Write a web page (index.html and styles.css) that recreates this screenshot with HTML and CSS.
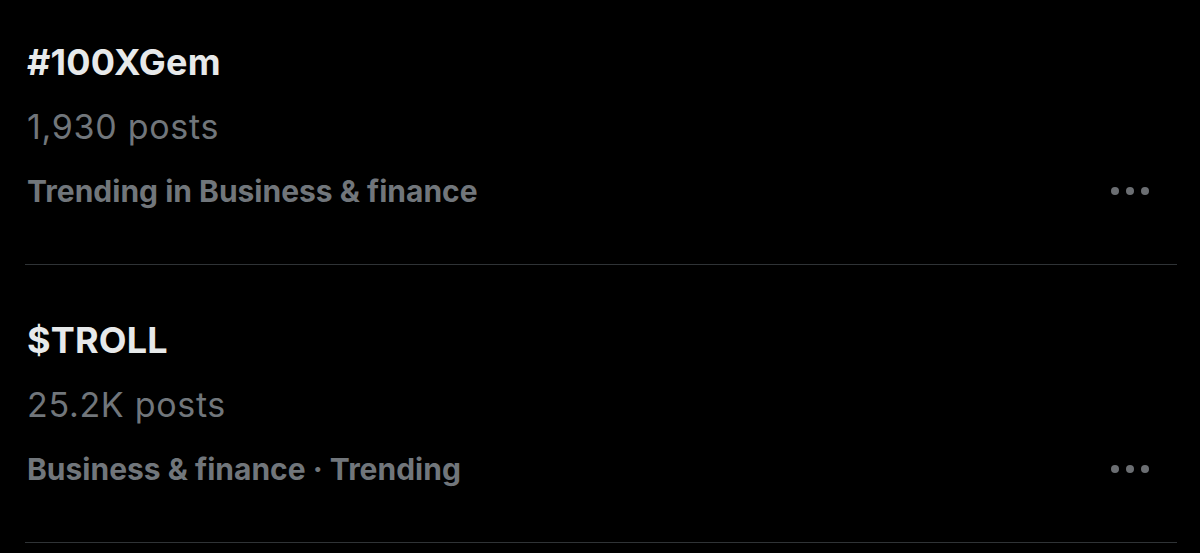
FILE: index.html
```html
<!DOCTYPE html>
<html lang="en">
<head>
    <meta charset="UTF-8">
    <meta name="viewport" content="width=device-width, initial-scale=1.0">
    <title>Trends</title>
    <link rel="stylesheet" href="styles.css">
</head>
<body>
    <div class="trends">
        <div class="trend">
            <div class="trend-name">#100XGem</div>
            <div class="trend-count">1,930 posts</div>
            <div class="trend-meta">
                <span>Trending in Business &amp; finance</span>
                <button class="more" type="button" aria-label="More">
                    <svg width="38" height="10" viewBox="0 0 38 10">
                        <circle cx="4" cy="5" r="4"/>
                        <circle cx="19" cy="5" r="4"/>
                        <circle cx="34" cy="5" r="4"/>
                    </svg>
                </button>
            </div>
        </div>
        <div class="trend">
            <div class="trend-name">$TROLL</div>
            <div class="trend-count">25.2K posts</div>
            <div class="trend-meta">
                <span>Business &amp; finance · Trending</span>
                <button class="more" type="button" aria-label="More">
                    <svg width="38" height="10" viewBox="0 0 38 10">
                        <circle cx="4" cy="5" r="4"/>
                        <circle cx="19" cy="5" r="4"/>
                        <circle cx="34" cy="5" r="4"/>
                    </svg>
                </button>
            </div>
        </div>
    </div>
</body>
</html>
```

FILE: styles.css
```css
body {
    margin: 0;
    padding: 0;
    background-color: #000;
    font-family: 'Inter', 'Noto Sans', sans-serif;
    color: #e7e9ea;
    overflow: hidden;
}

/* list is scrolled a little, first row's top padding is cut off */
.trends {
    display: flex;
    flex-direction: column;
    margin-top: -13px;
    padding: 0 23px 0 25px;
}

.trend {
    display: flex;
    flex-direction: column;
    padding: 53px 0 55px 2px;
    border-bottom: 1px solid #2f3336;
}

.trend-name {
    font-size: 36px;
    font-weight: 700;
    line-height: 44px;
    letter-spacing: 0.2px;
}

.trend-count {
    font-size: 34px;
    line-height: 40px;
    letter-spacing: 0.7px;
    margin-top: 23px;
    color: #71767b;
}

.trend-meta {
    display: flex;
    align-items: center;
    justify-content: space-between;
    font-size: 30px;
    font-weight: 700;
    line-height: 36px;
    margin-top: 26px;
    color: #71767b;
}

.more {
    background: none;
    border: none;
    padding: 0;
    margin-right: 28px;
    cursor: pointer;
}

.more svg {
    display: block;
    fill: #6b6e72;
}
```
